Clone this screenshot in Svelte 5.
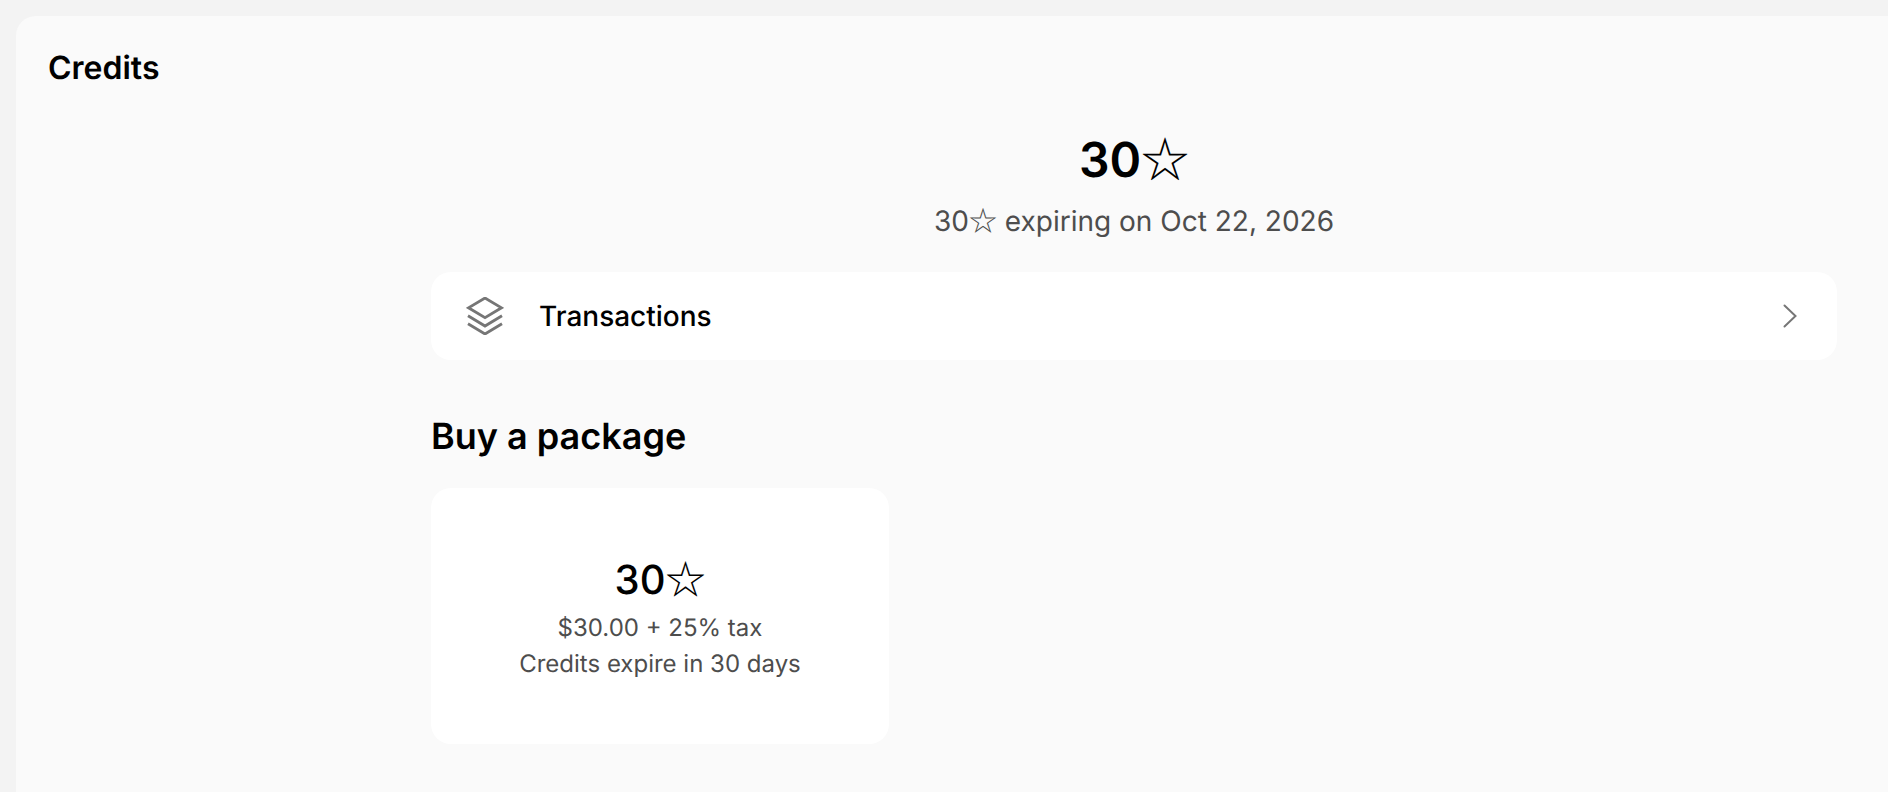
<script>
  const title = 'Credits';
</script>

<main class="panel">
  <h1>{title}</h1>
  <div class="content">
    <section class="balance">
      <div class="amount">30<span class="star">☆</span></div>
      <div class="expiry">30<span class="star">☆</span> expiring on Oct 22, 2026</div>
    </section>
    <div class="row">
      <svg class="layers" viewBox="0 0 38 38" width="38" height="38" fill="none" stroke="#767676" stroke-width="2.8" stroke-linejoin="miter">
        <path d="M19 1 35.5 10.8 19 20.6 2.5 10.8Z" />
        <path d="M2 18.7 19 29 36 18.7" />
        <path d="M2 26.7 19 37 36 26.7" />
      </svg>
      <span class="label">Transactions</span>
      <svg class="chev" viewBox="0 0 14 24" width="14" height="24" fill="none" stroke="#767676" stroke-width="2" stroke-linecap="round"><path d="M1.5 1.5 12.5 12 1.5 22.5" /></svg>
    </div>
    <h2>Buy a package</h2>
    <div class="card">
      <div class="pkg">30<span class="star">☆</span></div>
      <div class="line first">$30.00 + 25% tax</div>
      <div class="line">Credits expire in 30 days</div>
    </div>
  </div>
</main>

<style>
  :global(body) {
    margin: 0;
    background: #f3f3f3;
    font-family: Inter, "Noto Sans CJK JP", "Noto Sans", sans-serif;
    text-rendering: geometricPrecision;
    overflow: hidden;
  }
  .panel {
    margin: 16px 0 0 16px;
    height: 776px;
    background: #fafafa;
    border-radius: 20px 0 0 0;
    padding: 32px 51px 0 32px;
    box-sizing: border-box;
    color: #000;
  }
  h1 {
    margin: 0;
    font-size: 32px;
    line-height: 40px;
    font-weight: 600;
  }
  .star {
    font-family: "Noto Sans CJK JP", sans-serif;
    font-weight: 400;
  }
  .content {
    margin-left: 383px;
  }
  .balance {
    text-align: center;
    padding-top: 39px;
  }
  .amount {
    font-size: 48px;
    line-height: 58px;
    font-weight: 600;
  }
  .expiry {
    font-size: 28px;
    line-height: 38px;
    color: #4d4d4d;
    margin-top: 12px;
  }
  .row {
    display: flex;
    align-items: center;
    height: 88px;
    margin-top: 32px;
    background: #fff;
    border-radius: 20px;
    padding: 0 40px 0 35px;
  }
  .label {
    flex: 1;
    margin-left: 35px;
    font-size: 28px;
    font-weight: 500;
  }
  h2 {
    margin: 54px 0 0;
    font-size: 36px;
    line-height: 44px;
    font-weight: 600;
  }
  .card {
    margin-top: 30px;
    width: 458px;
    height: 256px;
    box-sizing: border-box;
    background: #fff;
    border-radius: 20px;
    text-align: center;
    padding-top: 65px;
  }
  .pkg {
    font-size: 40px;
    line-height: 48px;
    font-weight: 500;
  }
  .line {
    font-size: 24px;
    line-height: 36px;
    color: #4d4d4d;
  }
  .line.first {
    margin-top: 6px;
  }
</style>
